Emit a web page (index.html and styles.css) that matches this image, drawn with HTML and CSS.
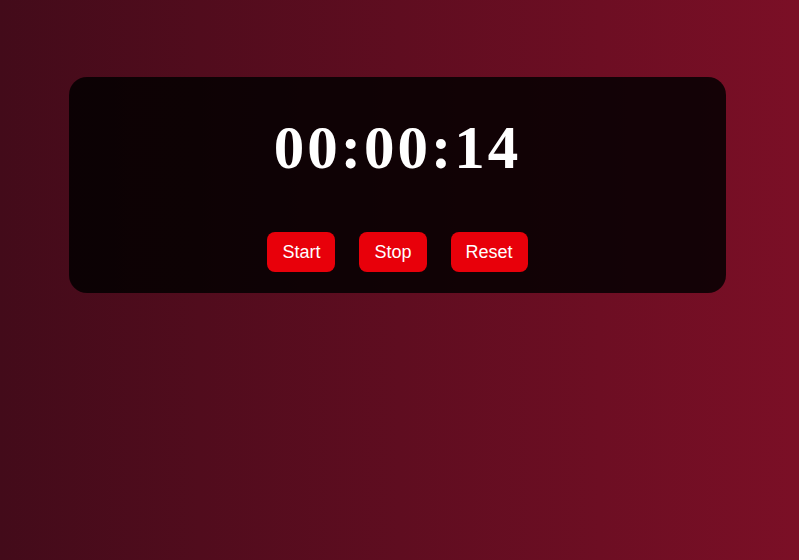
FILE: index.html
```html
<!DOCTYPE html>
<html>
<head>
<meta charset="utf-8">
<link rel="stylesheet" href="styles.css">
</head>
<body>
<div class="card">
  <div class="timer">00:00:14</div>
  <div class="controls">
    <button class="btn">Start</button>
    <button class="btn">Stop</button>
    <button class="btn">Reset</button>
  </div>
</div>
</body>
</html>
```
FILE: styles.css
```css
html, body {
  margin: 0;
  height: 100%;
}
body {
  background: linear-gradient(to right, #430b1a, #7b0f26);
  font-family: "Liberation Sans", Arial, sans-serif;
  padding-top: 77px;
  box-sizing: border-box;
}
.card {
  width: 657px;
  margin-left: 69px;
  box-sizing: border-box;
  padding: 35px 20px 21px;
  border-radius: 18px;
  background: rgba(0, 0, 0, 0.83);
  text-align: center;
}
.timer {
  font-family: "Liberation Serif", "Times New Roman", serif;
  font-weight: bold;
  font-size: 61px;
  line-height: 71px;
  letter-spacing: 3px;
  color: #fff;
  margin-bottom: 49px;
}
.controls {
  display: flex;
  justify-content: center;
  gap: 24px;
}
.btn {
  height: 40px;
  padding: 0 15px;
  border: none;
  border-radius: 8px;
  background: #e8000a;
  color: #fff;
  font-family: "Liberation Sans", Arial, sans-serif;
  font-size: 18px;
}
```
